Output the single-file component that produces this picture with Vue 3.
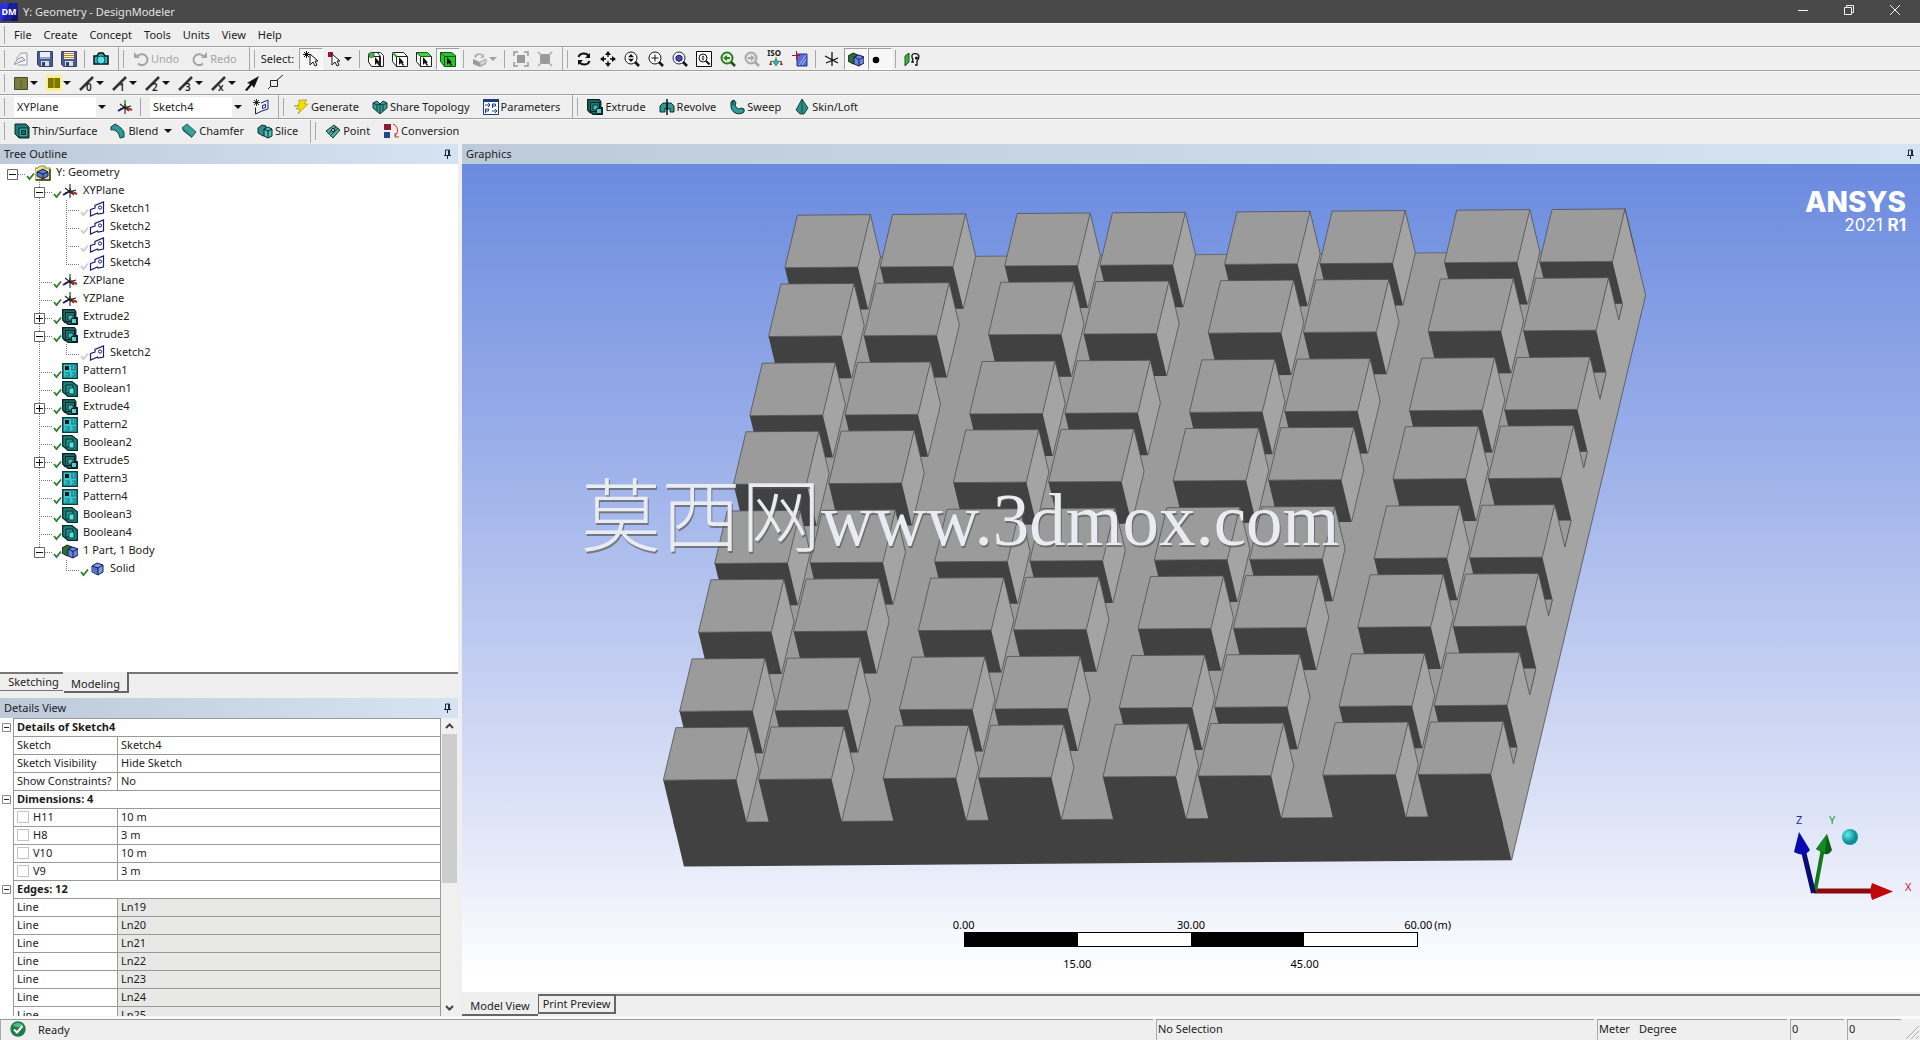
<script setup>
import { ref } from 'vue'

const icons = {
  dm: '<rect width="16" height="16" rx="1" fill="#1c1f9c"/><path d="M0 0h8L2 16H0z" fill="#3030d8"/><path d="M9 16 16 6v10z" fill="#10126a"/>',
  page: '<path d="M3 8 8 2h6v12H5" fill="#f4f4f8" stroke="#999aa5"/><path d="M1 13c2-1 2-4 4-5l4-2 3 3-5 2c-2 0-3 3-6 2z" fill="#e9eaf0" stroke="#888a98"/>',
  save: '<path d="M.5.5h15v15h-13l-2-2z" fill="#4b5a8c" stroke="#36436f"/><path d="M3 1h10v7H3z" fill="#e8eefa"/><path d="M3 6h10v2H3z" fill="#8ea6dc"/><path d="M4 10h8v5H4z" fill="#d9dde8"/><path d="M5 11h3v4H5z" fill="#36436f"/>',
  saveas: '<path d="M.5.5h15v15h-13l-2-2z" fill="#4b5a8c" stroke="#36436f"/><path d="M3 1h10v7H3z" fill="#fff6dc"/><path d="M3 2.500h10M3 4.500h10M3 6.500h10" stroke="#b8832c"/><path d="M4 10h8v5H4z" fill="#d9dde8"/><path d="M5 11h3v4H5z" fill="#36436f"/>',
  camera: '<path d="M1 5h3l2-3h4l2 3h3v8H1z" fill="#28b8c4" stroke="#111" stroke-width="1.500"/><circle cx="8" cy="9" r="4" fill="#5be0e6" stroke="#0e4a50"/>',
  undo: '<path d="M4.500 5.500A5.500 5.500 0 1 1 5 12.500" fill="none" stroke="#a5a5a5" stroke-width="2"/><path d="M1 1v6h6z" fill="#a5a5a5"/><path d="M8 13.500h4" stroke="#a5a5a5"/>',
  redo: '<path d="M11.500 5.500A5.500 5.500 0 1 0 11 12.500" fill="none" stroke="#a5a5a5" stroke-width="2"/><path d="M15 1v6H9z" fill="#a5a5a5"/><path d="M4 13.500h4" stroke="#a5a5a5"/>',
  pick: '<path d="M3.500 0v7M0 3.500h7M1 1l5 5M6 1 1 6" stroke="#111" stroke-width="1"/><path d="M7 3v11l3-3 2 4 2-1-2-4h3z" fill="#fff" stroke="#111"/>',
  pickred: '<path d="M1 1h5v5H1z" fill="#a3122c"/><path d="M5 3v11l3-3 2 4 2-1-2-4h3z" fill="#fff" stroke="#111"/>',
  cubeV: '<path d="M3.500 5.500h8v10h-8L.5 11V3l3 2.500M3.500 1.500h9l3 3v11h-4" fill="#fff" stroke="#222"/><path d="M3.500 5.500h9l-3-4M12.500 5.500v10" fill="none" stroke="#222"/><circle cx="3.500" cy="4" r="2.800" fill="#48b048" stroke="#1a5c1a" stroke-width=".6"/><path d="M7 6v8l2-2 2 3 1-1-1.500-2.500H12z" fill="#111"/>',
  cubeE: '<path d="M4.500 5.500h11v10h-11zM4.500 5.500l-4-4h11l4 4M.5 1.500v9l4 5" fill="#fff" stroke="#222"/><path d="M.5 1.500l4 4" stroke="#2fae2f" stroke-width="2"/><path d="M7 6v8l2-2 2 3 1-1-1.500-2.500H12z" fill="#111"/>',
  cubeF: '<path d="M4.500 5.500h11v10h-11zM.5 1.500v9l4 5" fill="#fff" stroke="#222"/><path d="M.5 1.500h11l4 4h-11z" fill="#46d046" stroke="#185c18"/><path d="M7 6v8l2-2 2 3 1-1-1.500-2.500H12z" fill="#111"/>',
  cubeB: '<path d="M.5 1.500h11l4 3v11h-11l-4-5z" fill="#2cc42c" stroke="#125a12"/><path d="M.5 1.500l4 4h11M4.500 5.500v10" fill="none" stroke="#125a12"/><path d="M7 6v8l2-2 2 3 1-1-1.500-2.500H12z" fill="#111"/>',
  grayBox: '<path d="M1 8l7 3v5l-7-3zM8 11l6-3v5l-6 3z" fill="#999"/><path d="M8 11l6-3V12l-6 3z" fill="#d8d8d8" stroke="#aaa"/><path d="M2 6c0-4 7-5 9-2l1-2v5H8l2-2C8 3 5 4 4 7z" fill="#b4b4b4"/>',
  grayExp: '<path d="M4 4h8v8H4z" fill="#999"/><path d="M1 5V1h4M11 1h4v4M15 11v4h-4M5 15H1v-4" fill="none" stroke="#999" stroke-width="1.500"/>',
  grayShr: '<path d="M3 3h10v10H3z" fill="#999"/><path d="M1 1l4 4M15 1l-4 4M15 15l-4-4M1 15l4-4" stroke="#aaa" stroke-width="1.500"/>',
  rotate: '<path d="M2.500 6C4 1.500 10 1.500 12.500 4.500M13.500 10C12 14.500 6 14.500 3.500 11.500" fill="none" stroke="#111" stroke-width="2"/><path d="M14 2v5H9zM2 14V9h5z" fill="#111"/>',
  pan: '<path d="M8 2v4M8 10v4M2 8h4M10 8h4" stroke="#111" stroke-width="1.300"/><path d="M8 0l3 4H5zM8 16l3-4H5zM0 8l4-3v6zM16 8l-4-3v6z" fill="#111"/>',
  zoomUD: '<circle cx="7" cy="7" r="6" fill="#fff" stroke="#111"/><path d="M11 11l4 4" stroke="#111" stroke-width="2.500"/><path d="M7 3l3 3.300H4zM7 11 4 7.700h6z" fill="#111"/>',
  zoomPlus: '<circle cx="7" cy="7" r="6" fill="#fff" stroke="#111"/><path d="M11 11l4 4" stroke="#111" stroke-width="2.500"/><path d="M7 3.500v7M3.500 7h7" stroke="#111"/>',
  zoomCube: '<circle cx="7" cy="7" r="6" fill="#fff" stroke="#22223a"/><path d="M11 11l4 4" stroke="#111" stroke-width="2.500"/><path d="M4 5.500l3-1.500 3 1.500v3.500L7 10.500 4 9z" fill="#4a4ac0" stroke="#18185a"/>',
  zoomBox: '<path d="M.5.5h15v15H.5z" fill="#fff" stroke="#111"/><circle cx="7" cy="7" r="4" fill="none" stroke="#111"/><path d="M10 10l3.500 3.500" stroke="#111" stroke-width="2"/><path d="M7 4.500l1.500 2h-3zM7 9.500 5.500 7.500h3z" fill="#111"/>',
  zoomPrev: '<circle cx="7" cy="7" r="5.500" fill="#e7f4e0" stroke="#317c24" stroke-width="2"/><path d="M11 11l4 4" stroke="#1d4c16" stroke-width="2.500"/><path d="M3 7l4-3v2h3v2H7v2z" fill="#317c24"/>',
  zoomNext: '<circle cx="7" cy="7" r="5.500" fill="#e4e4e4" stroke="#a8a8a8" stroke-width="2"/><path d="M11 11l4 4" stroke="#a8a8a8" stroke-width="2.500"/><path d="M11 7 7 4v2H4v2h3v2z" fill="#a8a8a8"/>',
  iso: '<path d="M8 8l3 3-3 4-3-4z" fill="#2fb0b0" stroke="#176a6a" stroke-width=".6"/><path d="M3 10l-2 4h3z" fill="#b02020"/><path d="M2 11l3-1M14 11l-3-1" stroke="#555"/><path d="M13 10l2 4h-3z" fill="#b02020"/><path d="M8 6v3" stroke="#209020"/>',
  lookat: '<path d="M5 3h10v12H5z" fill="#5a6fd0" stroke="#22308c"/><path d="M7 14l7-10M10 14l4-6" stroke="#aab6f0"/><path d="M0 4.500h8M4.500 0v9" stroke="#b01818" fill="none" stroke-width="1"/>',
  axes: '<path d="M8 1v14M2 12 14 7M1 5l13 7" stroke="#111" stroke-width="1.300"/>',
  cubes: '<path d="M0 5l5-3 5 2v6l-5 3-5-3z" fill="#2e6b3c" stroke="#0d2a14"/><path d="M6 6l5-2 5 2v6l-5 3-5-2z" fill="#6a86dc" stroke="#141c4c"/><path d="M6 6l5 2.500L16 6M11 8.500V15" fill="none" stroke="#141c4c"/>',
  dot: '<circle cx="4" cy="9" r="3.300" fill="#050505"/>',
  display: '<path d="M1 5l4-3v9l-4 4z" fill="#44b044" stroke="#14541a"/><path d="M8 4c1-2 6-2 7 1 0 3-1 4-2 5v4h-2M8 4v3l1 1-1 3h2" fill="none" stroke="#111" stroke-width="1.300"/><circle cx="12.500" cy="7" r="1.500" fill="#111"/>',
  olive: '<path d="M1.500 2.500h13v12h-13z" fill="#7c7c40" stroke="#4c4c22"/><path d="M8 5v7" stroke="#5a5a28"/>',
  olive2: '<path d="M0 0h16v16H0z" fill="#f6f090"/><path d="M2 3h12v10H2z" fill="#7d7700"/><path d="M8 3v10" stroke="#c9bf20"/>',
  arrow: '<path d="M1 15l5-6-3-1L15 1l-5 12-2-3-5 6z" fill="#111"/>',
  tag: '<path d="M2.500 5.500h7v6h-7zM2 12l-2 2M9 5l6-5" fill="none" stroke="#222"/>',
  plane: '<path d="M8 8 15 11" stroke="#b02828" stroke-width="2"/><path d="M8 8V1" stroke="#3c8c3c" stroke-width="1.600"/><path d="M8 8 1 12" stroke="#1a1a70" stroke-width="2"/><path d="M8 5v10M3 5l9 7M3 10l11-3" stroke="#222" stroke-width="1.100"/>',
  newsk: '<path d="M3.500 0v7M0 3.500h7M1 1l5 5M6 1 1 6" stroke="#111" stroke-width=".9"/><path d="M2.500 8.500V15L9 12l6-2V1L8 4" fill="none" stroke="#20207a"/><path d="M9.500 6.500l3-1v3l-3 1z" fill="none" stroke="#20207a"/>',
  bolt: '<path d="M6 1h8l-3 4h4L5 15l2-5H3l3-3H1l5-1z" fill="#f2e000" stroke="#a89a10" stroke-width=".7"/>',
  share: '<path d="M1 4l4-2 3 3 3-3 4 2v5l-7 6-7-6z" fill="#3b9c98" stroke="#113c3a"/><path d="M1 4l4 2 3-1 3 1 4-2M5 6v6M8 5v9M11 6v6" fill="none" stroke="#113c3a"/>',
  params: '<path d="M.5.5h15v15H.5z" fill="#fff" stroke="#1b3a8c"/><path d="M0 0h16v3H0z" fill="#1b3a8c"/><path d="M2 6h5M5 4l2 2-2 2M9 12h5M12 10l2 2-2 2" fill="none" stroke="#1b3a8c"/><path d="M9.500 9V5h3v2h-3M2.500 14v-4h3v2h-3" fill="none" stroke="#1b3a8c"/>',
  extrude: '<path d="M.7.7h11.600l1.500 2v6h1.500v6.600H6L4 13.500H3L.7 11z" fill="#1b6a67" stroke="#062423" stroke-width="1.300"/><path d="M3.500 3.500h9v9h-9z" fill="#237a77" stroke="#062423"/><path d="M6 6h5v5H6z" fill="#49b8b2" stroke="#062423" stroke-width=".8"/><path d="M9.500 9.500h5v5h-5z" fill="#58cfc9" stroke="#062423"/>',
  revolve: '<path d="M1 7l3-3h4v7l-2-2v4H1zM8 4h4l3 3v6h-4V9l-3 2z" fill="#2f9b96" stroke="#0a2c2b"/><path d="M8 0v16" stroke="#111" stroke-width="1.500"/>',
  sweep: '<path d="M2 3l3-2 2 3-1 2c1 3 4 5 6 3l3 1v3c-5 4-13 1-13-6z" fill="#2f9b96" stroke="#0a2c2b"/><path d="M4 1v5" stroke="#0a2c2b"/>',
  skin: '<path d="M8 0l6 9-4 6H6l-4-4z" fill="#2f8f86" stroke="#0a2c2b" stroke-width=".8"/><path d="M8 0v15" stroke="#0a4c48"/>',
  thin: '<path d="M1 1h11l3 3v11H5l-4-4z" fill="#237a77" stroke="#0a2c2b"/><path d="M5 5h9v9H5z" fill="#39a8a3" stroke="#0a2c2b"/><path d="M7.500 7.500h4v4h-4z" fill="#1e6f6c" stroke="#0a2c2b"/>',
  blend: '<path d="M1 4l4-3c4 2 9 6 9 9v4l-4 1C9 10 6 6 1 7z" fill="#2f9b96" stroke="#0a3c3a"/>',
  chamfer: '<path d="M1 5l5-4 9 8-4 5z" fill="#37a39c" stroke="#1c5c58"/><path d="M1 5l1 3 9 7v-1" fill="#1c5c58"/>',
  slice: '<path d="M1 5l4-3 4 1v9l-3 1-5-3z" fill="#2f8f8a" stroke="#0a2c2b"/><path d="M7 6l4-2 4 2v7l-4 2-4-2z" fill="#55bdb6" stroke="#0a2c2b"/><path d="M7 6l4 2 4-2M11 8v7" fill="none" stroke="#0a2c2b"/>',
  point: '<path d="M1 8l8-6 6 5-7 8z" fill="#54aaa4" stroke="#113c3a"/><path d="M4 10l7-6M6 12l7-7" stroke="#113c3a"/><circle cx="8" cy="7" r="1.500" fill="#fff" stroke="#111"/>',
  conv: '<path d="M1 1h7v6H1z" fill="#8c1c30"/><path d="M1 9h6v6H1z" fill="#1c4a8c"/><path d="M10 1c5 2 6 8 2 12M12 10v4h4" fill="none" stroke="#c03030"/>',
  root: '<path d="M0 3h3l2-2h5v2h5v12H0z" fill="#f0e690" stroke="#8c8440"/><path d="M15 4v11H1" fill="none" stroke="#3c3c20" stroke-width="1.500"/><path d="M2 7l6-3 5 3v4l-5 3-6-3z" fill="#5a78c8" stroke="#14203c"/><path d="M2 7l6 2 5-2M8 9v5" fill="none" stroke="#14203c"/>',
  sketch: '<path d="M1.500 8.500 6 7V4.500L14.500 1v11L9 13l-.5-1L1.500 15z" fill="none" stroke="#1c1c78" stroke-width="1.200"/><circle cx="11" cy="6.500" r="1.600" fill="none" stroke="#1c1c78"/>',
  pattern: '<path d="M.8.8h14.400v14.400H.8z" fill="#38c6cc" stroke="#0c3c40" stroke-width="1.500"/><path d="M3 3h4v4H3z" fill="#04181a"/><path d="M10 2v5h3V2M3 10h4v3H3M10 10h3v3h-3" fill="none" stroke="#0f7a80" stroke-width="1.200"/>',
  boolean: '<path d="M.7.7H10l5.300 4v10.600H6L.7 11z" fill="#1e807c" stroke="#062c2b" stroke-width="1.300"/><path d="M4 4h7v8H4z" fill="#2b9692" stroke="#062c2b"/><path d="M7 7h5v6H7z" fill="#5fdcdc" stroke="#0a4c4a"/>',
  cube: '<path d="M3 5l5-3 6 2v7l-5 3-6-3z" fill="#7f9ae4" stroke="#141c4c"/><path d="M3 5l6 2v7l-6-3z" fill="#5470c0"/><path d="M3 5l6 2 5-3M9 7v7" fill="none" stroke="#141c4c"/>',
  ok: '<circle cx="8" cy="8" r="7.700" fill="#1f7d46"/><path d="M3 4a7 7 0 0 1 10 0c-3 3-7 3-10 0z" fill="#5db886"/><path d="M4 8.500l3 3L12.500 5" fill="none" stroke="#fff" stroke-width="2"/>'
}
const sketchLine = '<path d="M1 15 14 2" stroke="#333" stroke-width="2.500"/>'
const digits = ['0', '1', '2', '3', 'x']

const menus = ['File', 'Create', 'Concept', 'Tools', 'Units', 'View', 'Help']
const viewTools = ['rotate', 'pan', 'zoomUD', 'zoomPlus', 'zoomCube', 'zoomBox', 'zoomPrev', 'zoomNext', 'iso', 'lookat']

const plane = ref('XYPlane')
const sketch = ref('Sketch4')

const tree = [
  { l: 0, t: 'Y: Geometry', i: 'root', box: '-' },
  { l: 1, t: 'XYPlane', i: 'plane', box: '-' },
  { l: 2, t: 'Sketch1', i: 'sketch' },
  { l: 2, t: 'Sketch2', i: 'sketch' },
  { l: 2, t: 'Sketch3', i: 'sketch' },
  { l: 2, t: 'Sketch4', i: 'sketch', last: true },
  { l: 1, t: 'ZXPlane', i: 'plane' },
  { l: 1, t: 'YZPlane', i: 'plane' },
  { l: 1, t: 'Extrude2', i: 'extrude', box: '+' },
  { l: 1, t: 'Extrude3', i: 'extrude', box: '-' },
  { l: 2, t: 'Sketch2', i: 'sketch', last: true },
  { l: 1, t: 'Pattern1', i: 'pattern' },
  { l: 1, t: 'Boolean1', i: 'boolean' },
  { l: 1, t: 'Extrude4', i: 'extrude', box: '+' },
  { l: 1, t: 'Pattern2', i: 'pattern' },
  { l: 1, t: 'Boolean2', i: 'boolean' },
  { l: 1, t: 'Extrude5', i: 'extrude', box: '+' },
  { l: 1, t: 'Pattern3', i: 'pattern' },
  { l: 1, t: 'Pattern4', i: 'pattern' },
  { l: 1, t: 'Boolean3', i: 'boolean' },
  { l: 1, t: 'Boolean4', i: 'boolean' },
  { l: 1, t: '1 Part, 1 Body', i: 'cubes', box: '-', last: true },
  { l: 2, t: 'Solid', i: 'cube', last: true, closed: true }
]

const details = [
  { group: 'Details of Sketch4' },
  { k: 'Sketch', v: 'Sketch4' },
  { k: 'Sketch Visibility', v: 'Hide Sketch' },
  { k: 'Show Constraints?', v: 'No' },
  { group: 'Dimensions: 4' },
  { k: 'H11', v: '10 m', check: true },
  { k: 'H8', v: '3 m', check: true },
  { k: 'V10', v: '10 m', check: true },
  { k: 'V9', v: '3 m', check: true },
  { group: 'Edges: 12' },
  ...[19, 20, 21, 22, 23, 24, 25].map(n => ({ k: 'Line', v: 'Ln' + n, ro: true }))
]

// Parallel projection of the block array: u runs along the columns, d along the depth, h down from the tops.
const P = (u, d, h) => [663.3 + u + d * 0.2373 + h * 0.2394, 780.2 - u * 0.0076 - d + h].map(n => n.toFixed(1)).join(',')
const colStarts = [0, 95.2, 219.8, 315, 439.6, 534.8, 659.4, 754.6]
const rowStarts = [512.5, 443.7, 364.5, 295.9, 216.7, 147.9, 68.8, 0]
const W = 73, D = 52.5, H = 42.4, FULL = 86.3, UMAX = 827.6, DMAX = 565
const pts = (...a) => a.map(p => P(...p)).join(' ')
const base = {
  floor: pts([0, 0, H], [UMAX, 0, H], [UMAX, DMAX, H], [0, DMAX, H]),
  side: pts([UMAX, 0, H], [UMAX, DMAX, H], [UMAX, DMAX, FULL], [UMAX, 0, FULL]),
  front: pts([0, 0, H], [UMAX, 0, H], [UMAX, 0, FULL], [0, 0, FULL]),
  edges: pts([UMAX, DMAX, 0], [UMAX, DMAX, FULL], [UMAX, 0, FULL])
}
const rowGap = d => d - rowStarts[rowStarts.indexOf(d) + 1] - D
const blocks = rowStarts.flatMap(d => colStarts.map((u, c) => {
  const drop = d === 0 ? H + 8 : H
  return {
    top: pts([u, d, 0], [u + W, d, 0], [u + W, d + D, 0], [u, d + D, 0]),
    front: pts([u, d, 0], [u + W, d, 0], [u + W, d, drop], [u, d, drop]),
    right: pts([u + W, d, 0], [u + W, d + D, 0], [u + W, d + D, H + (c === 7 ? 2 : 0)], [u + W, d, H + (c === 7 ? 2 : 0)]),
    edge: c < 7
      ? pts([u + W, d, H], [u + W, d + D, H], [u + W, d + D, 0])
      : pts([u + W, d + D, H], [u + W, d + D, 0]),
    notch: c === 7 && d > 0 ? pts([u + W, d, H], [u + W, d - rowGap(d), H]) : ''
  }
}))
</script>

<template>
  <div class="app">
    <header class="title">
      <span class="dm"><svg class="ic" viewBox="0 0 16 16" v-html="icons.dm"></svg><b>DM</b></span>
      <span class="title-text">Y: Geometry - DesignModeler</span>
      <button class="win" aria-label="Minimize"><svg viewBox="0 0 12 12"><path d="M1 6.500h10" /></svg></button>
      <button class="win" aria-label="Restore"><svg viewBox="0 0 12 12"><path d="M1.500 3.500h7v7h-7zM3.500 3.500v-2h7v7h-2" /></svg></button>
      <button class="win" aria-label="Close"><svg viewBox="0 0 12 12"><path d="M1 1l10 10M11 1 1 11" /></svg></button>
    </header>

    <nav class="bar">
      <i class="grip"></i>
      <button v-for="m in menus" :key="m" class="menu">{{ m }}</button>
    </nav>

    <div class="bar">
      <i class="grip"></i>
      <button v-for="n in ['page', 'save', 'saveas']" :key="n" class="tb" :aria-label="n"><svg class="ic" viewBox="0 0 16 16" v-html="icons[n]"></svg></button>
      <i class="sep"></i>
      <button class="tb" aria-label="camera"><svg class="ic" viewBox="0 0 16 16" v-html="icons.camera"></svg></button>
      <i class="end"></i><i class="grip"></i>
      <button class="lb off"><svg class="ic" viewBox="0 0 16 16" v-html="icons.undo"></svg>Undo</button>
      <button class="lb off"><svg class="ic" viewBox="0 0 16 16" v-html="icons.redo"></svg>Redo</button>
      <i class="end"></i><i class="grip"></i>
      <span class="word">Select:</span>
      <button class="tb on" aria-label="pick"><svg class="ic" viewBox="0 0 16 16" v-html="icons.pick"></svg></button>
      <button class="tb drop" aria-label="filter"><svg class="ic" viewBox="0 0 16 16" v-html="icons.pickred"></svg><i class="caret"></i></button>
      <i class="sep"></i>
      <button v-for="n in ['cubeV', 'cubeE', 'cubeF', 'cubeB']" :key="n" class="tb" :class="{ on: n === 'cubeB' }" :aria-label="n"><svg class="ic" viewBox="0 0 16 16" v-html="icons[n]"></svg></button>
      <i class="sep"></i>
      <button class="tb drop off" aria-label="extend"><svg class="ic" viewBox="0 0 16 16" v-html="icons.grayBox"></svg><i class="caret"></i></button>
      <i class="sep"></i>
      <button v-for="n in ['grayExp', 'grayShr']" :key="n" class="tb" :aria-label="n"><svg class="ic" viewBox="0 0 16 16" v-html="icons[n]"></svg></button>
      <i class="end"></i><i class="grip"></i>
      <button v-for="n in viewTools" :key="n" class="tb" :aria-label="n"><b v-if="n === 'iso'" class="iso">ISO</b><svg class="ic" viewBox="0 0 16 16" v-html="icons[n]"></svg></button>
      <i class="sep"></i>
      <button v-for="n in ['axes', 'cubes', 'dot']" :key="n" class="tb" :class="{ on: n !== 'axes' }" :aria-label="n"><svg class="ic" viewBox="0 0 16 16" v-html="icons[n]"></svg></button>
      <i class="sep"></i>
      <button class="tb" aria-label="display"><svg class="ic" viewBox="0 0 16 16" v-html="icons.display"></svg></button>
    </div>

    <div class="bar">
      <i class="grip"></i>
      <button v-for="n in ['olive', 'olive2']" :key="n" class="tb drop" :aria-label="n"><svg class="ic" viewBox="0 0 16 16" v-html="icons[n]"></svg><i class="caret"></i></button>
      <button v-for="n in digits" :key="n" class="tb drop"><svg class="ic" viewBox="0 0 16 16" v-html="sketchLine"></svg><span class="digit">{{ n }}</span><i class="caret"></i></button>
      <button v-for="n in ['arrow', 'tag']" :key="n" class="tb" :aria-label="n"><svg class="ic" viewBox="0 0 16 16" v-html="icons[n]"></svg></button>
    </div>

    <div class="bar">
      <i class="grip"></i>
      <label class="combo"><select v-model="plane" aria-label="Plane"><option>XYPlane</option><option>ZXPlane</option><option>YZPlane</option></select><i class="caret"></i></label>
      <button class="tb" aria-label="New plane"><svg class="ic" viewBox="0 0 16 16" v-html="icons.plane"></svg></button>
      <i class="sep"></i>
      <label class="combo"><select v-model="sketch" aria-label="Sketch"><option>Sketch1</option><option>Sketch2</option><option>Sketch3</option><option>Sketch4</option></select><i class="caret"></i></label>
      <button class="tb" aria-label="New sketch"><svg class="ic" viewBox="0 0 16 16" v-html="icons.newsk"></svg></button>
      <i class="end"></i><i class="grip"></i>
      <button class="lb"><svg class="ic" viewBox="0 0 16 16" v-html="icons.bolt"></svg>Generate</button>
      <button class="lb"><svg class="ic" viewBox="0 0 16 16" v-html="icons.share"></svg>Share Topology</button>
      <button class="lb"><svg class="ic" viewBox="0 0 16 16" v-html="icons.params"></svg>Parameters</button>
      <i class="end"></i><i class="grip"></i>
      <button class="lb"><svg class="ic" viewBox="0 0 16 16" v-html="icons.extrude"></svg>Extrude</button>
      <button class="lb"><svg class="ic" viewBox="0 0 16 16" v-html="icons.revolve"></svg>Revolve</button>
      <button class="lb"><svg class="ic" viewBox="0 0 16 16" v-html="icons.sweep"></svg>Sweep</button>
      <button class="lb"><svg class="ic" viewBox="0 0 16 16" v-html="icons.skin"></svg>Skin/Loft</button>
    </div>

    <div class="bar final">
      <i class="grip"></i>
      <button class="lb"><svg class="ic" viewBox="0 0 16 16" v-html="icons.thin"></svg>Thin/Surface</button>
      <button class="lb menu-lb"><svg class="ic" viewBox="0 0 16 16" v-html="icons.blend"></svg>Blend<i class="caret"></i></button>
      <button class="lb"><svg class="ic" viewBox="0 0 16 16" v-html="icons.chamfer"></svg>Chamfer</button>
      <button class="lb"><svg class="ic" viewBox="0 0 16 16" v-html="icons.slice"></svg>Slice</button>
      <i class="end"></i><i class="grip"></i>
      <button class="lb"><svg class="ic" viewBox="0 0 16 16" v-html="icons.point"></svg>Point</button>
      <button class="lb"><svg class="ic" viewBox="0 0 16 16" v-html="icons.conv"></svg>Conversion</button>
    </div>

    <main class="work">
      <aside class="left">
        <h2 class="head">Tree Outline<svg class="pin" viewBox="0 0 9 11"><path d="M2.500 1v5.500h4V1zM1 6.500h7M4.500 7v3M5.500 1v5" /></svg></h2>
        <ul class="tree">
          <li v-for="(n, k) in tree" :key="k">
            <svg class="gut" :viewBox="`${-27 * n.l} 0 ${35 + 27 * n.l} 18`" :width="35 + 27 * n.l" height="18">
              <g fill="none" stroke="#777" stroke-dasharray="1 1">
                <path d="M12 10.500h14" />
                <path v-if="n.l" :d="n.last ? 'M12.500 0v10' : 'M12.500 0v18'" />
                <path v-if="n.l === 2 && !n.closed" d="M-14.500 0v18" />
              </g>
              <g v-if="n.box" fill="#fff" stroke="#666">
                <path d="M7.500 5.500h10v10h-10z" />
                <path :d="n.box === '+' ? 'M9 10.500h7M12.500 7v7' : 'M9 10.500h7'" stroke="#111" />
              </g>
              <path d="M27 12l2.500 3L34 9.500" fill="none" :stroke="n.i === 'sketch' ? '#ccc' : '#2f7d32'" stroke-width="1.800" />
            </svg>
            <svg class="ic" viewBox="0 0 16 16" v-html="icons[n.i]"></svg>
            <span>{{ n.t }}</span>
          </li>
        </ul>
        <div class="tabs">
          <button class="tab first">Sketching</button>
          <button class="tab current">Modeling</button>
          <i class="fill"></i>
        </div>
        <h2 class="head">Details View<svg class="pin" viewBox="0 0 9 11"><path d="M2.500 1v5.500h4V1zM1 6.500h7M4.500 7v3M5.500 1v5" /></svg></h2>
        <div class="details">
          <div class="scrolled">
            <table>
              <colgroup><col class="c0"><col class="c1"><col></colgroup>
              <tbody>
                <tr v-for="(r, k) in details" :key="k">
                  <template v-if="r.group">
                    <td class="g0"><svg viewBox="0 0 9 9"><path d="M.5.5h8v8h-8z" stroke="#888" /><path d="M2 4.500h5" stroke="#222" /></svg></td>
                    <th colspan="2">{{ r.group }}</th>
                  </template>
                  <template v-else>
                    <td class="g0"></td>
                    <td><label v-if="r.check"><input type="checkbox">{{ r.k }}</label><template v-else>{{ r.k }}</template></td>
                    <td :class="{ ro: r.ro }">{{ r.v }}</td>
                  </template>
                </tr>
              </tbody>
            </table>
          </div>
          <div class="scroll">
            <svg viewBox="0 0 9 6"><path d="M1 5l3.500-3.500L8 5" /></svg>
            <div class="track"><i></i></div>
            <svg viewBox="0 0 9 6"><path d="M1 1l3.500 3.500L8 1" /></svg>
          </div>
        </div>
      </aside>

      <section class="right">
        <h2 class="head">Graphics<svg class="pin" viewBox="0 0 9 11"><path d="M2.500 1v5.500h4V1zM1 6.500h7M4.500 7v3M5.500 1v5" /></svg></h2>
        <div class="canvas">
          <svg class="scene" viewBox="462 164 1458 828">
            <polygon :points="base.floor" fill="#9b9b9b" stroke="#555" stroke-width=".7" />
            <polygon :points="base.side" fill="#a4a4a4" />
            <polygon :points="base.front" fill="#414141" />
            <g v-for="(b, k) in blocks" :key="k">
              <polygon :points="b.right" fill="#a4a4a4" />
              <polygon :points="b.front" fill="#414141" />
              <polygon :points="b.top" fill="#9b9b9b" stroke="#505050" stroke-width=".8" />
              <polyline :points="b.edge" fill="none" stroke="#505050" stroke-width=".8" />
              <polyline v-if="b.notch" :points="b.notch" fill="none" stroke="#505050" stroke-width=".8" />
            </g>
            <polyline :points="base.edges" fill="none" stroke="#505050" stroke-width=".8" />
            <text class="mark" x="581" y="545"><tspan class="cjk">莫西网</tspan><tspan class="lat">www.3dmox.com</tspan></text>
          </svg>
          <div class="brand"><strong>ANSYS</strong><span>2021 <b>R1</b></span></div>
          <div class="ruler">
            <div class="ticks"><span>0.00</span><span>30.00</span><span>60.00<em>(m)</em></span></div>
            <div class="scale"><i></i><i></i><i></i><i></i></div>
            <div class="ticks low"><span>15.00</span><span>45.00</span></div>
          </div>
          <svg class="triad" viewBox="1790 810 130 100">
            <defs><radialGradient id="ball" cx=".35" cy=".35"><stop offset="0" stop-color="#5ef0f0" /><stop offset="1" stop-color="#0c8f96" /></radialGradient></defs>
            <path d="M1814 892h59" stroke="#8c0a0a" stroke-width="5" />
            <path d="M1872 884l21 8.500-21 8.500c-2-5-2-12 0-17z" fill="#c00808" />
            <path d="M1815 892l7.500-40" stroke="#12781a" stroke-width="4" />
            <path d="M1827 835l5 16c-3 5-6 5-9 3l-7-4z" fill="#0b5c14" />
            <path d="M1827 835l-2 19-9-4z" fill="#168a22" />
            <path d="M1813.500 894 1803 850" stroke="#0a0a78" stroke-width="5" />
            <path d="M1799 833l11 18c-4 5-9 6-16 2z" fill="#0808b4" />
            <circle cx="1850" cy="838" r="8" fill="url(#ball)" />
            <text x="1796" y="825" fill="#2a2a9c">Z</text>
            <text x="1829" y="825" fill="#1c9c4c">Y</text>
            <text x="1905" y="892" fill="#c02040">X</text>
          </svg>
        </div>
        <div class="tabs view">
          <button class="tab current">Model View</button>
          <button class="tab boxed">Print Preview</button>
          <i class="fill"></i>
        </div>
      </section>
    </main>

    <footer class="status">
      <div class="ready"><svg class="ic" viewBox="0 0 16 16" v-html="icons.ok"></svg>Ready</div>
      <div class="sel">No Selection</div>
      <div class="unit"><span>Meter</span><span>Degree</span></div>
      <div class="num">0</div>
      <div class="num">0</div>
      <svg class="size" viewBox="0 0 16 16"><path d="M2 15 15 2M7 15l8-8M12 15l3-3" /></svg>
    </footer>
  </div>
</template>

<style>
body { overflow: hidden; background: #efefef; }
</style>

<style scoped>
.app { display: flex; flex-direction: column; height: 100vh; background: #efefef; color: #1c1c1c; font: 11px/18px "Noto Sans", "Open Sans", sans-serif; }
button { font: inherit; color: inherit; background: none; border: 0; padding: 0; display: flex; align-items: center; justify-content: center; white-space: nowrap; }
i { font-style: normal; }
.ic { width: 16px; height: 16px; flex: none; }

.title { flex: none; height: 23px; background: #494949; color: #e2e2e2; display: flex; align-items: center; padding-right: 2px; }
.dm { position: relative; width: 18px; height: 18px; margin-right: 5px; }
.dm .ic { width: 18px; height: 18px; display: block; }
.dm b { position: absolute; inset: 0; text-align: center; font-size: 9px; line-height: 18px; color: #fff; }
.title-text { flex: 1; }
.win { width: 46px; height: 20px; align-self: flex-start; }
.win svg { width: 12px; height: 12px; fill: none; stroke: #f2f2f2; }

.bar { flex: none; box-sizing: border-box; height: 24px; display: flex; align-items: center; border-bottom: 1px solid #a0a0a0; box-shadow: inset 0 1px #f9f9f9; }
.bar.final { border-bottom: 0; margin-bottom: 1px; }
.bar > i { flex: none; }
.grip { width: 9px; height: 18px; box-sizing: border-box; border-left: 4px solid transparent; background: linear-gradient(90deg, #aaa 1px, transparent 1px) no-repeat; }
.sep { width: 8px; height: 18px; background: linear-gradient(90deg, transparent 3px, #a8a8a8 3px, #a8a8a8 4px, transparent 4px); }
.end { width: 6px; height: 23px; box-sizing: border-box; border-right: 1px solid #a8a8a8; }
.menu { padding: 0 6px; }
.grip + .menu { padding-left: 5px; }
.tb { position: relative; flex: none; width: 24px; height: 22px; box-sizing: border-box; }
.tb.on { background: #f7f7f7; border: 1px solid #fff; border-top-color: #a0a0a0; border-left-color: #a0a0a0; }
.tb.drop { width: 33px; gap: 1px; }
.caret { flex: none; width: 0; height: 0; border: 4px solid transparent; border-top-color: #111; border-bottom: 0; }
.off { color: #a5a5a5; }
.off .caret { border-top-color: #a0a0a0; }
.lb { height: 22px; padding: 0 7px 0 6px; gap: 2px; }
.grip + .lb { padding-left: 5px; }
.menu-lb { padding-right: 3px; }
.lb .caret { margin-left: 4px; }
.word { padding: 0 5px 0 2px; }
.digit { position: absolute; left: 11px; top: 8px; font-size: 10px; line-height: 14px; font-weight: 600; }
.iso { position: absolute; left: 3px; top: 1px; font-size: 8px; line-height: 8px; }
.combo { position: relative; display: flex; align-items: center; width: 104px; padding: 0 0 0 5px; box-sizing: border-box; }
.combo select { appearance: none; width: 99px; height: 20px; border: 0; padding: 0 0 0 3px; font: inherit; color: inherit; background: linear-gradient(#fff, #fff) no-repeat 0 0 / 82px 20px; }
.combo .caret { position: absolute; right: 7px; }

.work { flex: 1; min-height: 0; display: flex; gap: 4px; }
.left { width: 458px; flex: none; display: flex; flex-direction: column; }
.right { flex: 1; min-width: 0; display: flex; flex-direction: column; }
.head { flex: none; margin: 0; height: 20px; padding: 0 4px; font: inherit; line-height: 20px; display: flex; align-items: center; justify-content: space-between; background: linear-gradient(90deg, #bccad9, #d6e3f2); }
.pin { width: 9px; height: 11px; fill: none; stroke: #1c2a3a; margin-right: 2px; }
.right .pin { margin-right: 1px; }
.tree { flex: 508 1 0; min-height: 0; overflow: hidden; margin: 0; padding: 0; list-style: none; background: #fff; }
.tree li { display: flex; align-items: center; height: 18px; }
.gut { flex: none; }
.tree span { padding: 0 0 2px 5px; line-height: 16px; }
.tabs { flex: none; height: 26px; display: flex; align-items: flex-start; }
.tab { height: 19px; padding: 0 4px; border-top: 2px solid #777; box-sizing: border-box; }
.tab.first { width: 63px; border-bottom: 1px solid #777; padding-left: 8px; margin-right: 1px; }
.tab.current { height: 21px; width: 65px; border: 0 solid #666; border-width: 0 2px 2px 0; padding-top: 4px; }
.fill { flex: 1; border-top: 2px solid #777; }
.view { height: 24px; }
.view .tab.current { width: 76px; height: 24px; border-right-width: 0; padding-top: 5px; }
.view .boxed { height: 20px; width: 78px; margin-top: 2px; border: 2px solid #666; border-width: 2px 2px 2px 1px; }
.view .fill { margin-top: 2px; }

.details { flex: 298 1 0; min-height: 0; display: flex; background: #fff; overflow: hidden; }
.scrolled { flex: 1; overflow: hidden; border-right: 1px solid #999; }
table { width: 100%; table-layout: fixed; border-spacing: 0; }
.c0 { width: 13px; }
.c1 { width: 104px; }
td, th { height: 15px; line-height: 15px; padding: 0 0 2px 3px; border: 0 solid #999; border-width: 1px 0 0 1px; text-align: left; white-space: nowrap; }
.g0 { border: 0; padding: 0 0 0 2px; }
.g0 svg { display: block; width: 9px; height: 9px; fill: none; }
.ro { background: #e8e8e6; }
label { display: flex; align-items: center; gap: 4px; }
td input { appearance: none; width: 12px; height: 12px; margin: 0; border: 1px solid #c4c4c4; }
.scroll { width: 17px; display: flex; flex-direction: column; align-items: center; justify-content: space-between; background: #f0f0f0; }
.scroll svg { width: 9px; height: 6px; margin: 5px 0; fill: none; stroke: #444; stroke-width: 2; }
.track { flex: 1; width: 15px; }
.track i { display: block; height: 56%; background: #cdcdcd; }

.canvas { position: relative; flex: 1; min-height: 0; background: linear-gradient(#6b8bdf, #a0b3ea 38%, #e6eaf9 84%, #fff 98%); }
.scene { position: absolute; inset: 0; width: 100%; height: 100%; }
.mark { fill: #e9edf2; filter: drop-shadow(1px 2px 0 #555a); }
.cjk { font: 300 80px "Noto Sans CJK SC", sans-serif; }
.lat { font: 73px "Liberation Serif", serif; }
.brand { position: absolute; right: 14px; top: 24px; color: #fff; font-family: Inter, sans-serif; text-align: right; display: flex; flex-direction: column; }
.brand strong { font-size: 28px; line-height: 28px; font-weight: 800; }
.brand span { font-size: 17px; line-height: 18px; }
.ruler { position: absolute; left: 34%; right: 34%; bottom: 21px; margin: 0 6px; color: #000; line-height: 14px; }
.ticks { display: flex; justify-content: space-between; }
.ticks span { position: relative; width: 0; display: flex; justify-content: center; }
.ticks em { position: absolute; left: 16px; font-style: normal; }
.scale { display: flex; height: 13px; border: 1px solid #000; background: #fff; }
.scale i { flex: 1; }
.scale i:nth-child(odd) { background: #000; }
.low { justify-content: space-around; margin-top: 10px; }
.triad { position: absolute; right: 0; bottom: 83px; width: 130px; height: 100px; font: 11px "Noto Sans", sans-serif; }

.status { flex: none; margin-top: 3px; height: 21px; display: flex; gap: 3px; box-shadow: 0 -3px #fafafa; }
.status > div { box-sizing: border-box; border-top: 1px solid #999; border-left: 1px solid #aaa; padding-left: 1px; padding-bottom: 2px; line-height: 17px; }
.status .ready { flex: 1; display: flex; align-items: center; gap: 12px; padding-left: 9px; }
.sel { width: 438px; }
.unit { width: 190px; display: flex; gap: 9px; }
.num { width: 54px; }
.size { width: 16px; height: 16px; align-self: flex-end; stroke: #aaa; }
</style>
